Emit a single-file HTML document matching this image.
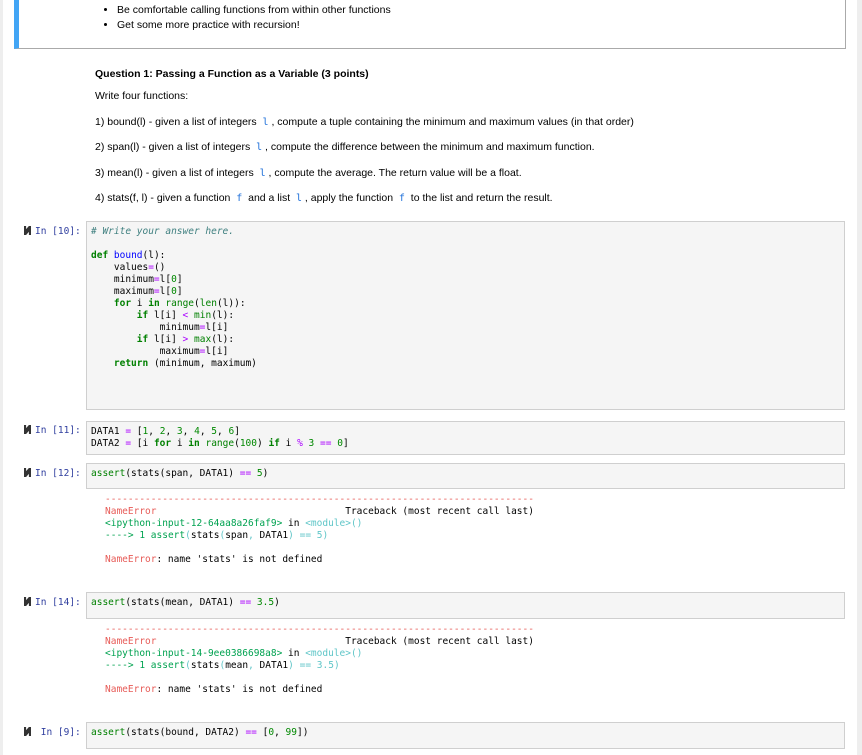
<!DOCTYPE html>
<html><head><meta charset="utf-8"><style>
*{margin:0;padding:0;box-sizing:border-box}
body{width:862px;height:755px;background:#eee;position:relative;overflow:hidden;font-family:"Liberation Sans",Arial,sans-serif;font-size:11px;color:#000}
#main{position:absolute;left:3px;top:0;width:854px;height:755px;background:#fff}
.top{position:absolute;left:11px;top:-2px;width:832px;height:51px;border:1px solid #aaa;border-left:5px solid #42a5f5;background:#fff}
.top ul{position:absolute;left:98px;top:4px;list-style:disc;font-size:10.5px;line-height:15px}
.t{position:absolute;left:92px;font-size:10.5px;white-space:pre}
.box{position:absolute;left:86px;width:759px;background:#f5f5f5;border:1px solid #cfcfcf}
pre{font-family:"DejaVu Sans Mono","Liberation Mono",monospace;font-size:9.5px;line-height:12px;white-space:pre}
.box pre{position:absolute;left:4px;top:4px}
.p{position:absolute;left:24px;font-family:"DejaVu Sans Mono",monospace;font-size:9.5px;color:#303f9f}
.p b{display:inline-block;width:7px;height:9px;background:#333;clip-path:polygon(0 0,30% 0,30% 35%,70% 0,70% 0,100% 0,100% 100%,70% 100%,70% 65%,30% 100%,0 100%);vertical-align:-1px;margin-right:4px}
.o{position:absolute;left:105px}
.k{color:#008000;font-weight:bold}.g{color:#008000}.n{color:#0000ff}.m{color:#a0f}.c{color:#408080;font-style:italic}.num{color:#080}
.r{color:#e75c58}.gr{color:#00a250}.cy{color:#60c6c8}
.code{font-family:"DejaVu Sans Mono",monospace;color:#1e6fd9;font-size:10px}
</style></head><body><div id="main">
<div class="top"><ul><li>Be comfortable calling functions from within other functions</li><li>Get some more practice with recursion!</li></ul></div>
<div class="t" style="top:68px;font-weight:bold">Question 1: Passing a Function as a Variable (3 points)</div>
<div class="t" style="top:90px">Write four functions:</div>
<div class="t" style="top:116px">1) bound(l) - given a list of integers  <span class="code">l</span> , compute a tuple containing the minimum and maximum values (in that order)</div>
<div class="t" style="top:141px">2) span(l) - given a list of integers  <span class="code">l</span> , compute the difference between the minimum and maximum function.</div>
<div class="t" style="top:167px">3) mean(l) - given a list of integers  <span class="code">l</span> , compute the average. The return value will be a float.</div>
<div class="t" style="top:192px">4) stats(f, l) - given a function  <span class="code">f</span>  and a list  <span class="code">l</span> , apply the function  <span class="code">f</span>  to the list and return the result.</div>
</div>

<div class="p" style="top:226px"><b></b>In [10]:</div>
<div class="box" style="top:221px;height:189px"><pre><span class="c"># Write your answer here.</span>

<span class="k">def</span> <span class="n">bound</span>(l):
    values<span class="m">=</span>()
    minimum<span class="m">=</span>l[<span class="num">0</span>]
    maximum<span class="m">=</span>l[<span class="num">0</span>]
    <span class="k">for</span> i <span class="k">in</span> <span class="g">range</span>(<span class="g">len</span>(l)):
        <span class="k">if</span> l[i] <span class="m">&lt;</span> <span class="g">min</span>(l):
            minimum<span class="m">=</span>l[i]
        <span class="k">if</span> l[i] <span class="m">&gt;</span> <span class="g">max</span>(l):
            maximum<span class="m">=</span>l[i]
    <span class="k">return</span> (minimum, maximum)</pre></div>

<div class="p" style="top:425px"><b></b>In [11]:</div>
<div class="box" style="top:421px;height:34px"><pre>DATA1 <span class="m">=</span> [<span class="num">1</span>, <span class="num">2</span>, <span class="num">3</span>, <span class="num">4</span>, <span class="num">5</span>, <span class="num">6</span>]
DATA2 <span class="m">=</span> [i <span class="k">for</span> i <span class="k">in</span> <span class="g">range</span>(<span class="num">100</span>) <span class="k">if</span> i <span class="m">%</span> <span class="num">3</span> <span class="m">==</span> <span class="num">0</span>]</pre></div>

<div class="p" style="top:468px"><b></b>In [12]:</div>
<div class="box" style="top:463px;height:26px"><pre><span class="g">assert</span>(stats(span, DATA1) <span class="m">==</span> <span class="num">5</span>)</pre></div>
<pre class="o" style="top:494px"><span class="r">---------------------------------------------------------------------------</span>
<span class="r">NameError</span>                                 Traceback (most recent call last)
<span class="gr">&lt;ipython-input-12-64aa8a26faf9&gt;</span> in <span class="cy">&lt;module&gt;()</span>
<span class="gr">----&gt; 1</span> <span class="gr">assert</span><span class="cy">(</span>stats<span class="cy">(</span>span<span class="cy">,</span> DATA1<span class="cy">)</span> <span class="cy">==</span> <span class="cy">5)</span>

<span class="r">NameError</span>: name 'stats' is not defined</pre>

<div class="p" style="top:597px"><b></b>In [14]:</div>
<div class="box" style="top:592px;height:27px"><pre><span class="g">assert</span>(stats(mean, DATA1) <span class="m">==</span> <span class="num">3.5</span>)</pre></div>
<pre class="o" style="top:624px"><span class="r">---------------------------------------------------------------------------</span>
<span class="r">NameError</span>                                 Traceback (most recent call last)
<span class="gr">&lt;ipython-input-14-9ee0386698a8&gt;</span> in <span class="cy">&lt;module&gt;()</span>
<span class="gr">----&gt; 1</span> <span class="gr">assert</span><span class="cy">(</span>stats<span class="cy">(</span>mean<span class="cy">,</span> DATA1<span class="cy">)</span> <span class="cy">==</span> <span class="cy">3.5)</span>

<span class="r">NameError</span>: name 'stats' is not defined</pre>

<div class="p" style="top:727px"><b></b> In [9]:</div>
<div class="box" style="top:722px;height:27px"><pre><span class="g">assert</span>(stats(bound, DATA2) <span class="m">==</span> [<span class="num">0</span>, <span class="num">99</span>])</pre></div>
</body></html>
